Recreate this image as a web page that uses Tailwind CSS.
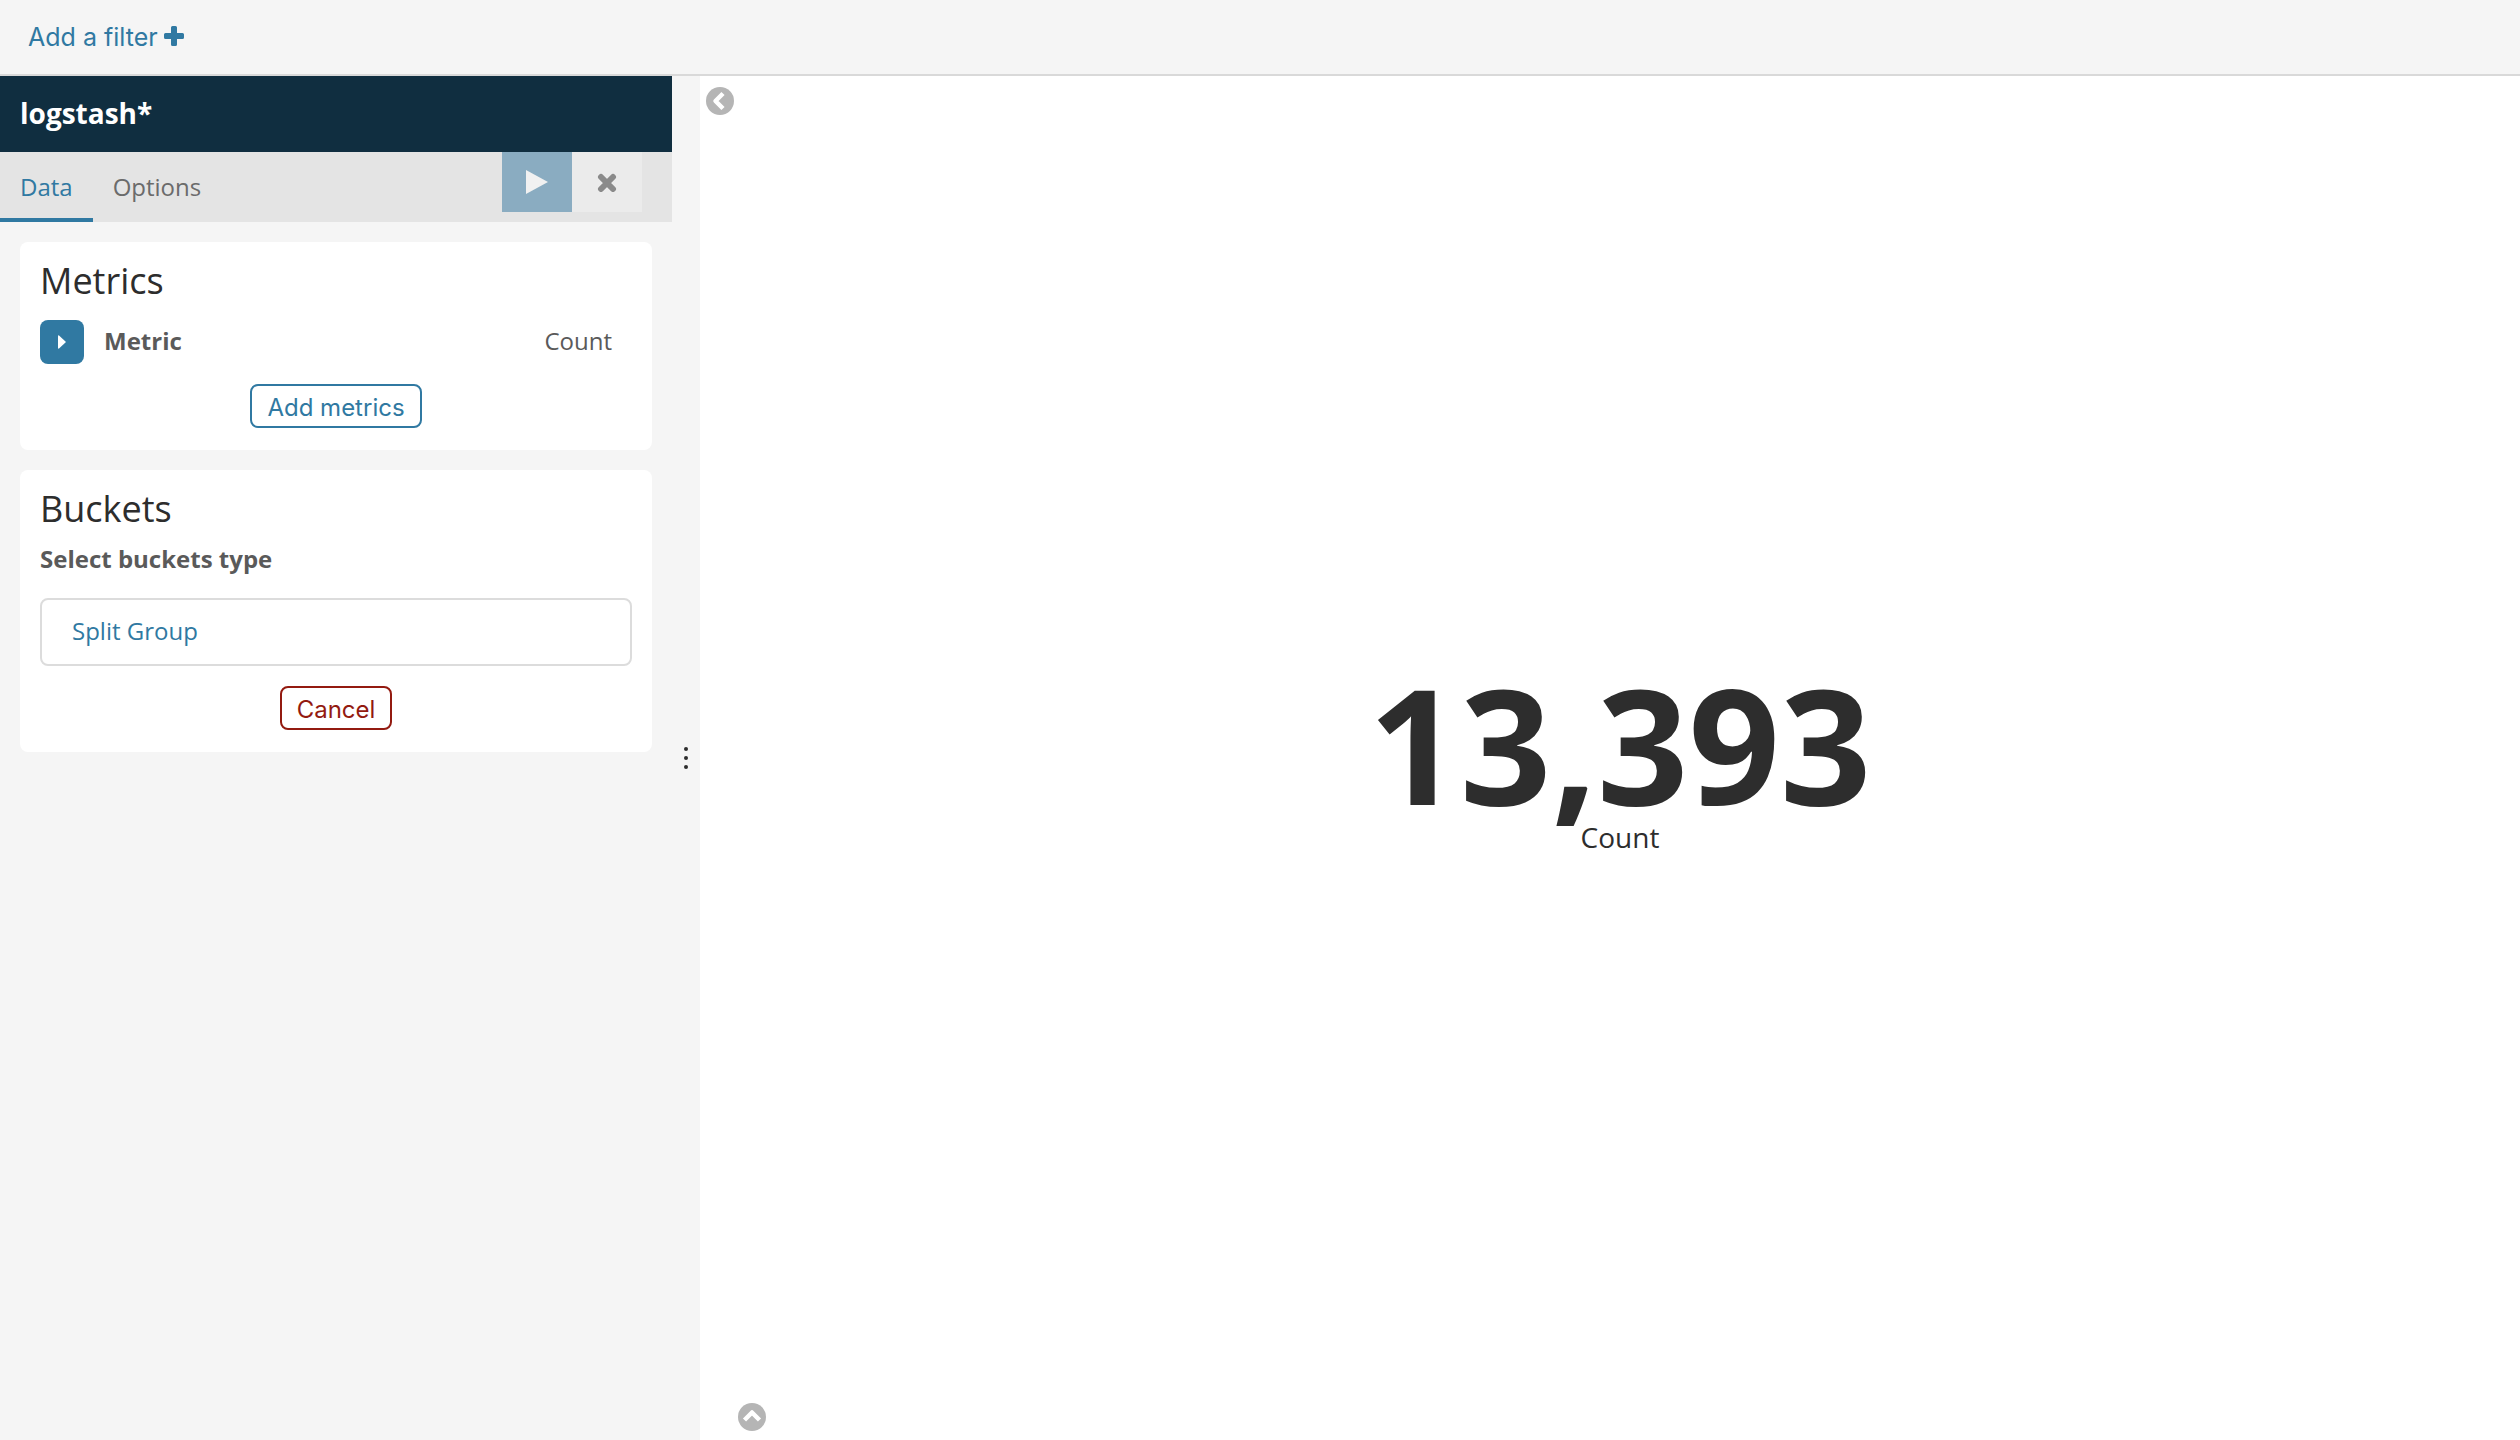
<!DOCTYPE html>
<html lang="en">
<head>
<meta charset="utf-8">
<title>Visualize</title>
<script src="https://cdn.jsdelivr.net/npm/@tailwindcss/browser@4"></script>
</head>
<body class="flex h-screen flex-col bg-white font-['Open_Sans',sans-serif] text-[24px] leading-8 text-[#5a5a5a]">
  <header class="flex h-19 shrink-0 items-center border-b-2 border-[#d9d9d9] bg-[#f5f5f5] px-7">
    <button type="button" class="flex items-center gap-1.5 font-[Inter,sans-serif] text-[25px] leading-8 text-[#3079a2]">Add a filter
      <svg class="mb-0.5 size-5" viewBox="0 0 20 20" fill="currentColor" aria-hidden="true"><path d="M8.5 0h3a1.500 1.500 0 0 1 1.500 1.500V7h5.500A1.500 1.500 0 0 1 20 8.500v3a1.500 1.500 0 0 1-1.500 1.500H13v5.500a1.500 1.500 0 0 1-1.500 1.500h-3A1.500 1.500 0 0 1 7 18.500V13H1.500A1.500 1.500 0 0 1 0 11.500v-3A1.500 1.500 0 0 1 1.500 7H7V1.500A1.500 1.500 0 0 1 8.500 0z"/></svg>
    </button>
  </header>
  <div class="flex min-h-0 flex-1">
    <aside class="flex w-[700px] shrink-0 bg-[#f5f5f5]">
      <div class="min-w-0 flex-1">
        <h1 class="flex h-19 items-center bg-[#102e40] px-5 pb-0.5 text-[28px] font-bold text-white">logstash*</h1>
        <div class="flex h-[70px] justify-between bg-[#e4e4e4] pr-[30px]">
          <nav class="flex">
            <a href="#data" class="flex items-center border-b-4 border-[#3079a2] px-5 pt-1 text-[#3079a2]">Data</a>
            <a href="#options" class="flex items-center border-b-4 border-transparent px-5 pt-1 text-[#6b6b6b]">Options</a>
          </nav>
          <div class="flex h-15">
            <button type="button" aria-label="Apply changes" class="flex w-[70px] items-center justify-center bg-[#8aacc1] text-[#f1f1f1]">
              <svg class="h-6 w-[22px]" viewBox="0 0 22 24" fill="currentColor"><path d="M0 0l22 12L0 24z"/></svg>
            </button>
            <button type="button" aria-label="Discard changes" class="flex w-[70px] items-center justify-center bg-[#ebebeb] text-[#8a8a8a]">
              <svg class="size-5" viewBox="0 0 20 20" fill="none" stroke="currentColor" stroke-width="6" stroke-linecap="round"><path d="M4 5l12 12M16 5l-12 12"/></svg>
            </button>
          </div>
        </div>
        <main class="flex flex-col gap-5 p-5">
          <section class="flex flex-col rounded-lg bg-white px-5 pt-5 pb-[22px]">
            <h2 class="text-[36px] leading-[38px] text-[#2d2d2d]">Metrics</h2>
            <div class="mt-5 flex items-center gap-5 pr-5">
              <button type="button" aria-label="Expand metric" class="flex size-11 items-center justify-center rounded-lg bg-[#3079a2] text-white">
                <svg class="h-3.5 w-2" viewBox="0 0 8 14" fill="currentColor"><path d="M0 1.200Q0 0 1 .500L8 7 1 13.500Q0 14 0 12.800z"/></svg>
              </button>
              <span class="flex-1 pb-0.5 font-bold">Metric</span>
              <span class="pb-0.5">Count</span>
            </div>
            <button type="button" class="mt-5 h-11 self-center rounded-lg border-2 border-[#3079a2] px-[15px] pt-1 font-[Inter,sans-serif] text-[#3079a2]">Add metrics</button>
          </section>
          <section class="flex flex-col rounded-lg bg-white px-5 pt-5 pb-[22px]">
            <h2 class="text-[36px] leading-[38px] text-[#2d2d2d]">Buckets</h2>
            <p class="mt-[15px] font-bold">Select buckets type</p>
            <ul class="mt-[23px] rounded-lg border-2 border-[#dcdcdc]">
              <li class="flex h-16 items-center px-[30px] pb-0.5"><a href="#split" class="text-[#3079a2]">Split Group</a></li>
            </ul>
            <button type="button" class="mt-5 h-11 self-center rounded-lg border-2 border-[#931a10] px-[15px] pt-1 font-[Inter,sans-serif] text-[#931a10]">Cancel</button>
          </section>
        </main>
      </div>
      <div class="flex w-7 cursor-col-resize flex-col items-center justify-center gap-[5px]">
        <i class="size-1 rounded-full bg-[#2d2d2d]"></i><i class="size-1 rounded-full bg-[#2d2d2d]"></i><i class="size-1 rounded-full bg-[#2d2d2d]"></i>
      </div>
    </aside>
    <section class="flex min-w-0 flex-1 flex-col">
      <button type="button" aria-label="Collapse sidebar" class="mt-[11px] ml-1.5 size-7 text-[#b5b5b5]">
        <svg class="size-7" viewBox="0 0 28 28"><circle cx="14" cy="14" r="14" fill="currentColor"/><path d="M17 6.500L9.500 14l7.500 7.500" fill="none" stroke="#fff" stroke-width="4.500" stroke-linejoin="round"/></svg>
      </button>
      <div class="flex flex-1 flex-col items-center justify-center pt-1 pl-5 text-center text-[#2d2d2d]">
        <div class="text-[160px] leading-[152px] font-bold">13,393</div>
        <div class="text-[28px] leading-9">Count</div>
      </div>
      <button type="button" aria-label="Show table" class="mb-[9px] ml-[38px] size-7 text-[#b5b5b5]">
        <svg class="size-7" viewBox="0 0 28 28"><circle cx="14" cy="14" r="14" fill="currentColor"/><path d="M6.500 17L14 9.500l7.500 7.500" fill="none" stroke="#fff" stroke-width="4.500" stroke-linejoin="round"/></svg>
      </button>
    </section>
  </div>
</body>
</html>
